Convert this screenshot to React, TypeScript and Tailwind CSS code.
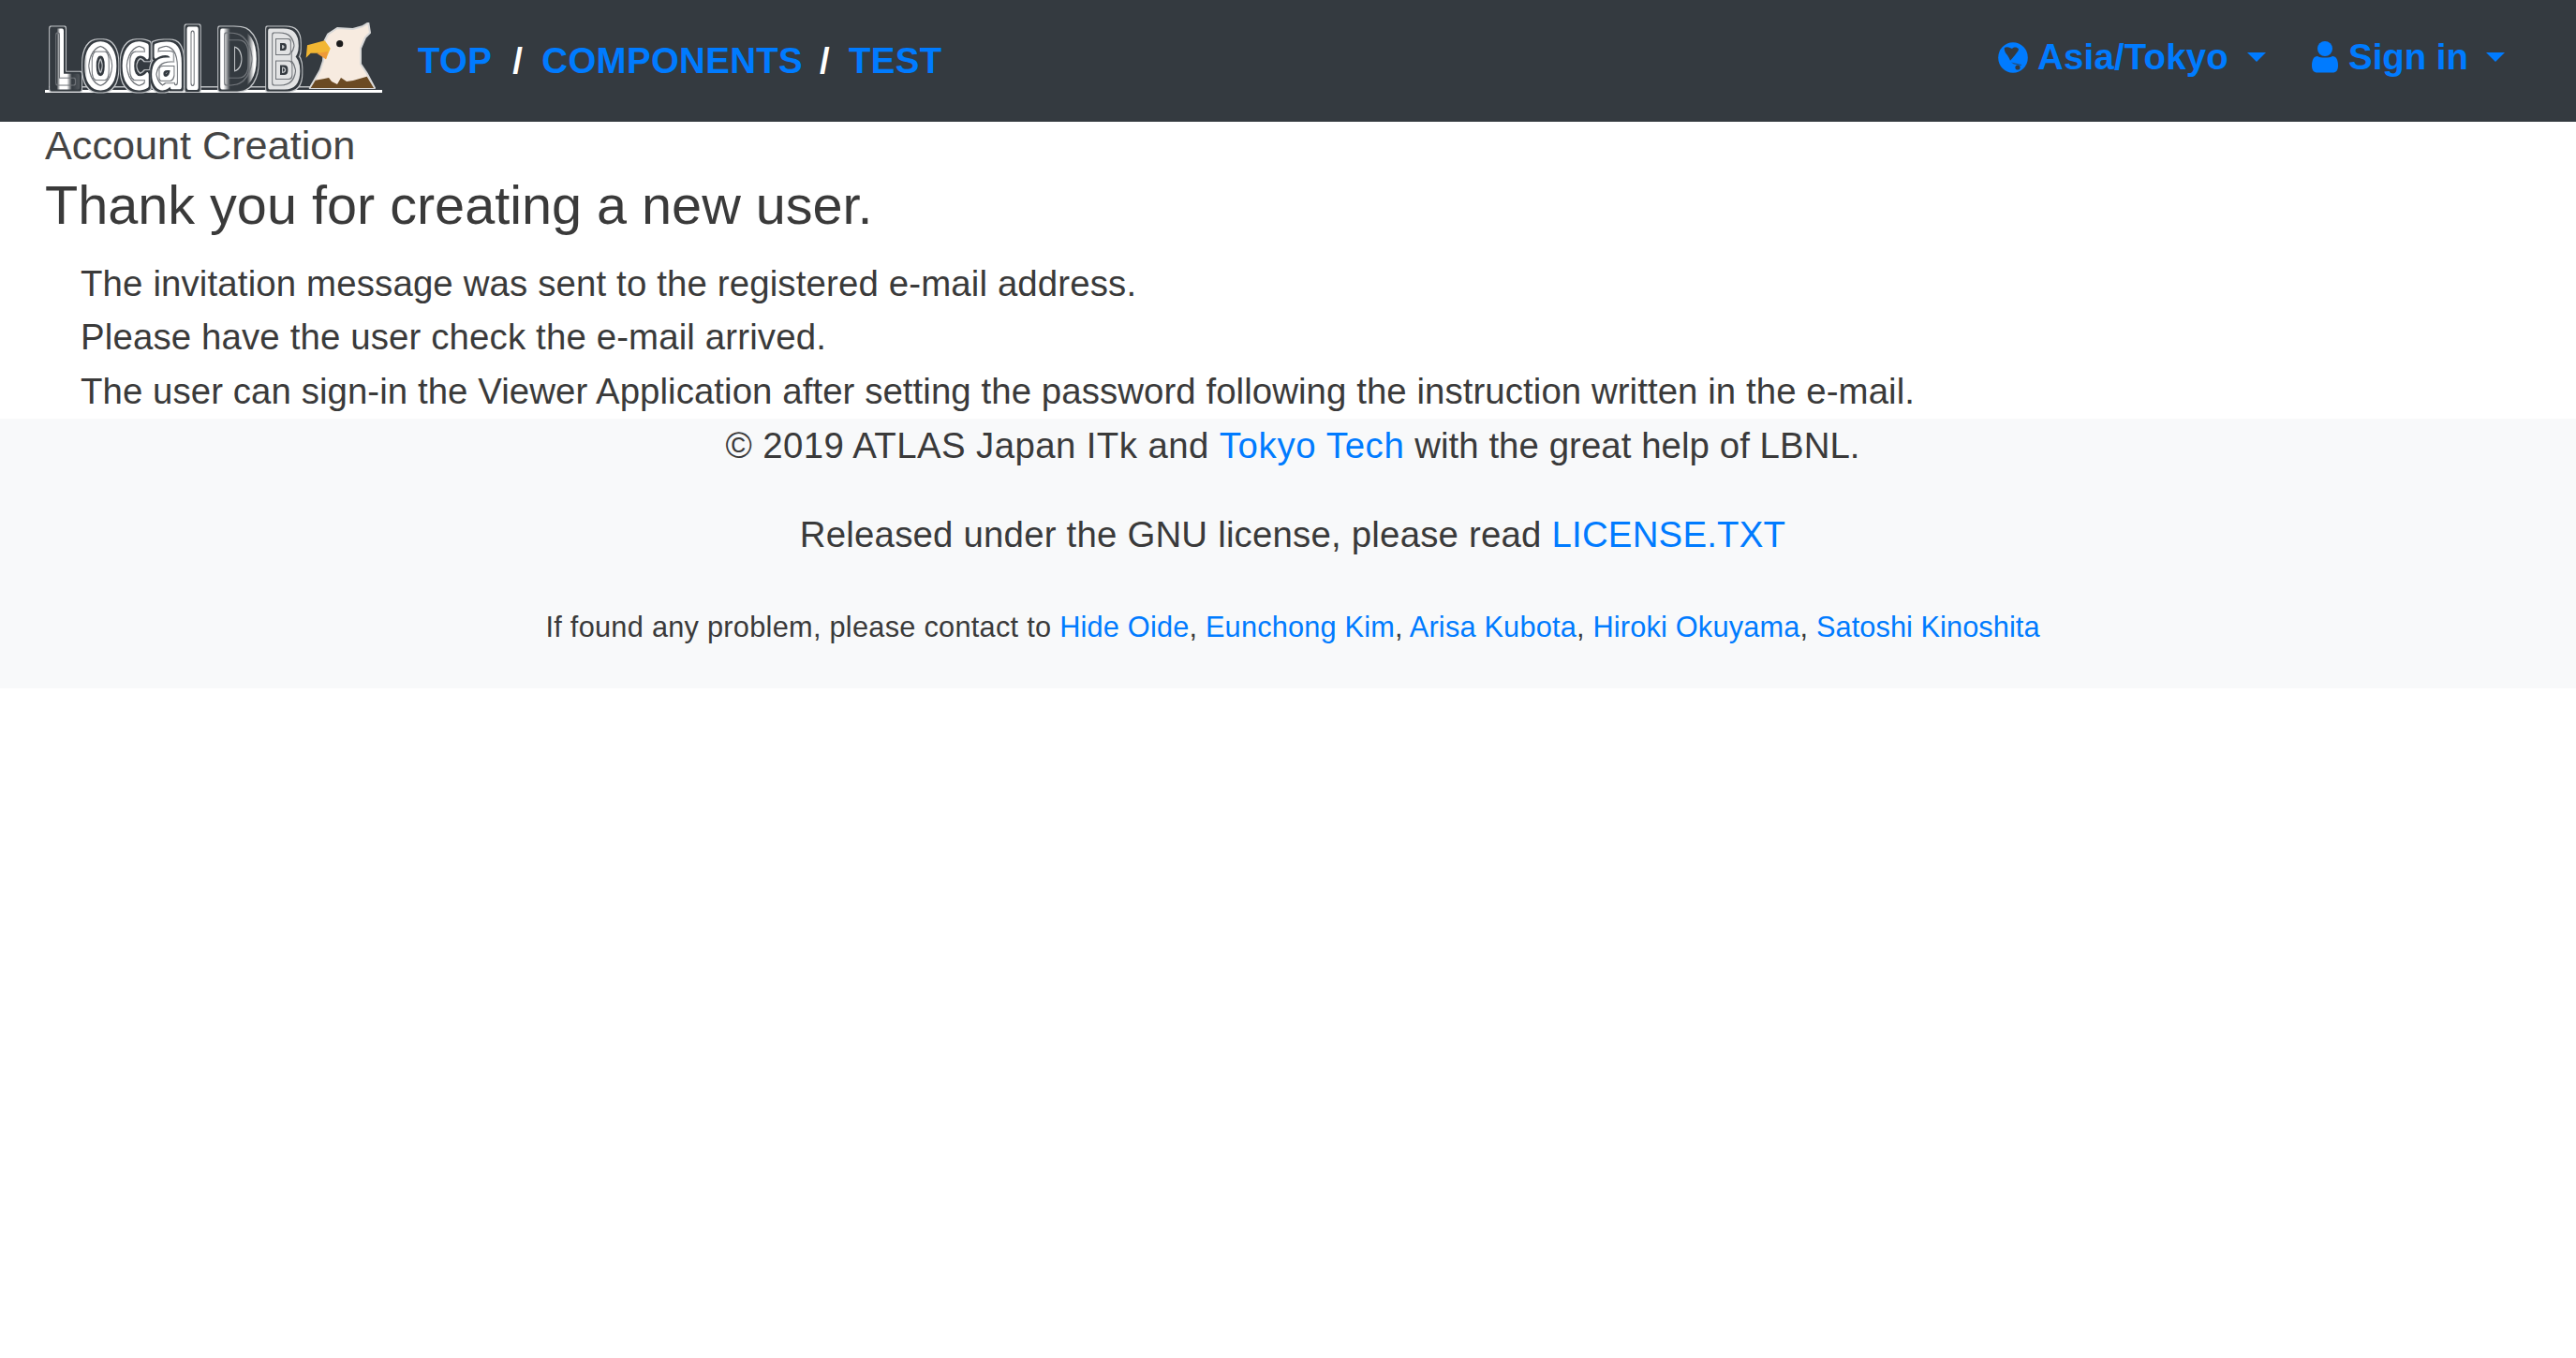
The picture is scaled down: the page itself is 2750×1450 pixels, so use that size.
function Logo() {
  return (
    <svg width="362" height="78" viewBox="0 0 362 78" className="block shrink-0">
      <defs>
        <linearGradient id="mottle" gradientUnits="userSpaceOnUse" x1="0" y1="0" x2="571" y2="0">
          <stop offset="0" stopColor="#343a40" />
          <stop offset="0.035" stopColor="#343a40" />
          <stop offset="0.045" stopColor="#ffffff" />
          <stop offset="0.065" stopColor="#ffffff" />
          <stop offset="0.08" stopColor="#343a40" />
          <stop offset="0.11" stopColor="#5a5f64" />
          <stop offset="0.125" stopColor="#ffffff" />
          <stop offset="0.51" stopColor="#ffffff" />
          <stop offset="0.53" stopColor="#ffffff" />
          <stop offset="0.55" stopColor="#343a40" />
          <stop offset="0.6" stopColor="#343a40" />
          <stop offset="0.62" stopColor="#ffffff" />
          <stop offset="0.645" stopColor="#ffffff" />
          <stop offset="0.655" stopColor="#e2e3e4" />
          <stop offset="1" stopColor="#e2e3e4" />
        </linearGradient>
        <filter id="contour" x="-5%" y="-20%" width="110%" height="140%" colorInterpolationFilters="sRGB">
          <feMorphology in="SourceAlpha" operator="dilate" radius="3" result="d3" />
          <feFlood floodColor="#c4c7ca" />
          <feComposite in2="d3" operator="in" result="outer" />
          <feMorphology in="SourceAlpha" operator="dilate" radius="2" result="d2" />
          <feFlood floodColor="#343a40" />
          <feComposite in2="d2" operator="in" result="gap" />
          <feMorphology in="SourceAlpha" operator="erode" radius="4" result="e1" />
          <feMorphology in="SourceAlpha" operator="erode" radius="5" result="e2" />
          <feFlood floodColor="#6f7378" />
          <feComposite in2="e1" operator="in" />
          <feComposite in2="e2" operator="out" result="ring" />
          <feMerge>
            <feMergeNode in="outer" />
            <feMergeNode in="gap" />
            <feMergeNode in="SourceGraphic" />
            <feMergeNode in="ring" />
          </feMerge>
        </filter>
      </defs>
      <rect x="4" y="68" width="300" height="1.5" fill="#b9bcbf" />
      <rect x="0" y="72" width="360" height="3" fill="#ffffff" />
      <g filter="url(#contour)">
        <text
          transform="scale(0.63 1)"
          x="6.5 66 130 180 236 292 373"
          y="69"
          fontSize="82"
          fontFamily="'DejaVu Sans', sans-serif"
          fontWeight="700"
          fill="url(#mottle)"
          stroke="url(#mottle)"
          strokeWidth="5"
          strokeLinejoin="round"
        >
          LocalDB
        </text>
      </g>
      <path d="M282.7 70 L293.7 51 L297 41 L298.7 19.3 L302 12.7 L312 6 L328.7 7 L338.7 4.3 L345.3 0.3 L347 11 L342 16 L337 27.7 L337 44.3 L343.7 54.3 L352 70 Z" fill="#f7ebe0" stroke="#d8d8d8" strokeWidth="2" strokeLinejoin="round" />
      <path d="M283.7 70 L288.7 61.7 L297 60.3 L303 59 L306 63 L312 66 L316 59 L322 63 L329 62 L343.7 57.7 L351 70 Z" fill="#6b4a23" />
      <path d="M278.7 37.7 L280 24.3 L298.7 19.3 L304.7 27.7 L300 39.3 L292 32.7 L283.7 32.7 Z" fill="#f2b632" />
      <path d="M290.3 33 L302 31 L300 39.3 Z" fill="#ee9a3a" />
      <circle cx="314.7" cy="22.7" r="3.6" fill="#1c1c1c" />
    </svg>
  );
}

function Globe() {
  return (
    <svg width="32" height="33" viewBox="0 0 32 33" className="block shrink-0" fill="#007bff">
      <ellipse cx="16" cy="16.5" rx="15.8" ry="16.3" />
      <path d="M6.7 6 C10 4 13 6 15 7 C17 5 20 5 22 7.3 C22 10 19 12 18 14 C16 16 15 18 13 19.7 C12 17 11 16 10 14 C8 12 6.5 9 6.7 6 Z" fill="#343a40" />
      <circle cx="21" cy="27" r="2.6" fill="#343a40" />
      <path d="M14 21.5 L25 24 L25 25 L17 23.5 Z" fill="#343a40" opacity="0.7" />
    </svg>
  );
}

function User() {
  return (
    <svg width="28" height="34" viewBox="0 0 28 34" className="block shrink-0" fill="#007bff">
      <circle cx="14" cy="8" r="8" />
      <path d="M6 16 C9 18 19 18 22 16 C26 16 28 20 28 26 C28 31 26 33.5 22 33.5 L6 33.5 C2 33.5 0 31 0 26 C0 20 2 16 6 16 Z" />
    </svg>
  );
}

function Caret() {
  return <i className="block border-t-[10px] border-x-[10px] border-x-transparent border-t-[#007bff]" />;
}

export default function App() {
  return (
    <div className="font-['Liberation_Sans',Arial,sans-serif] text-[38.4px] leading-[57.6px] text-[#3a3a3a]">
      <nav className="h-[130px] bg-[#343a40] flex items-start justify-between pl-12 pr-[76px]">
        <div className="flex items-start gap-[36px] h-[130px]">
          <div className="pt-[24px]"><Logo /></div>
          <div className="flex items-center font-bold text-[38.4px] tracking-[0.35px] leading-[60px] text-white gap-[20px] h-[130px]">
            <span className="text-[#007bff]">TOP</span>
            <span className="ml-[2px]">/</span>
            <span className="text-[#007bff]">COMPONENTS</span>
            <span className="-ml-[2px]">/</span>
            <span className="text-[#007bff]">TEST</span>
          </div>
        </div>
        <div className="flex items-center font-bold text-[#007bff] gap-[49px] h-[122px]">
          <span className="flex items-center">
            <Globe />
            <span className="ml-[10px] mr-[20px] tracking-[0.2px]">Asia/Tokyo</span>
            <Caret />
          </span>
          <span className="flex items-center">
            <User />
            <span className="ml-[11px] mr-[19px]">Sign in</span>
            <Caret />
          </span>
        </div>
      </nav>
      <main className="pl-12">
        <div className="text-[43.2px] leading-[50px] text-[#444]">Account Creation</div>
        <h1 className="text-[57.6px] leading-[78px]">Thank you for creating a new user.</h1>
        <div className="pl-[38px] pt-[16px]">
          <p className="tracking-[0.14px]">The invitation message was sent to the registered e-mail address.</p>
          <p className="tracking-[0.14px] -mt-px">Please have the user check the e-mail arrived.</p>
          <p className="tracking-[0.07px] mt-px">The user can sign-in the Viewer Application after setting the password following the instruction written in the e-mail.</p>
        </div>
      </main>
      <footer className="bg-[#f8f9fa] text-center h-[288px] pl-[10px]">
        <p className="tracking-[0.06px] leading-[58px]"><span className="tracking-[0.41px]">© 2019 ATLAS Japan ITk and </span><a className="text-[#007bff] tracking-[0.63px]">Tokyo Tech</a> with the great help of LBNL.</p>
        <p className="tracking-[0.2px] leading-[60px] mt-[36px]">Released under the GNU license, please read <a className="text-[#007bff]">LICENSE.TXT</a></p>
        <p className="tracking-[0.19px] text-[30.72px] leading-[48px] mt-[45px]"><span className="tracking-[0.27px]">If found any problem, please contact to </span><a className="text-[#007bff]">Hide Oide</a>, <a className="text-[#007bff]">Eunchong Kim</a>, <a className="text-[#007bff]">Arisa Kubota</a>, <a className="text-[#007bff]">Hiroki Okuyama</a>, <a className="text-[#007bff] tracking-[0.07px]">Satoshi Kinoshita</a></p>
      </footer>
    </div>
  );
}
